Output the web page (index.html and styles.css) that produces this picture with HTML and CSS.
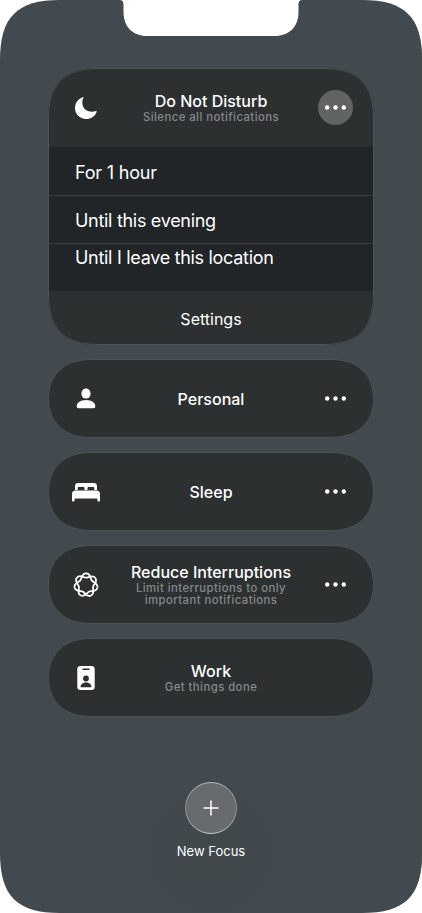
FILE: index.html
```html
<!DOCTYPE html>
<html lang="en">
<head>
<meta charset="utf-8">
<title>Focus</title>
<link rel="stylesheet" href="styles.css">
</head>
<body>
<svg class="defs" width="0" height="0" aria-hidden="true">
  <defs>
    <path id="pill" d="M.5 39.500C.5 16 15.500 .5 43 .5H283C310.500 .5 325.500 16 325.500 39.500S310.500 78.500 283 78.500H43C15.500 78.500 .5 63 .5 39.500Z"/>
    <g id="dots"><circle cx="2.200" cy="2.500" r="2.200"/><circle cx="10.500" cy="2.500" r="2.200"/><circle cx="18.800" cy="2.500" r="2.200"/></g>
    <path id="loop" d="M0-11.700C5-11.700 4.200-6.300 5.700-4.550C7.200-2.800 12.520-1.270 11.410 2.600"/>
  </defs>
</svg>
<main class="phone">
  <div class="notch"><svg width="182" height="37" viewBox="0 0 182 37"><path d="M0 0C3 .3 3.500 2 3.500 5V12C3.500 27 13 36 27 36H155C169 36 178.500 27 178.500 12V5C178.500 2 179 .3 182 0Z"/></svg></div>
  <div class="list">
    <section class="card dnd">
      <header class="row">
        <span class="icon"><svg width="24" height="24" viewBox="0 0 24 24"><path d="M8.800 1.200C3.800 3 1 7 1 12.100C1 18.400 5.900 23 12.100 23C17 23 21.300 20.200 22.700 15.700C22.900 15 22.400 14.700 21.800 15C20.700 15.500 19.600 15.700 18.200 15.700C12 15.700 8.300 12 8.300 6.200C8.300 4.700 8.600 3.200 9.300 2C9.700 1.400 9.500 .9 8.800 1.200Z"/></svg></span>
        <div class="text"><h2>Do Not Disturb</h2><p>Silence all notifications</p></div>
        <button class="more active" aria-label="More"><svg width="21" height="5"><use href="#dots"/></svg></button>
      </header>
      <ul class="options">
        <li class="first">For 1 hour</li>
        <li>Until this evening</li>
        <li class="last">Until I leave this location</li>
      </ul>
      <div class="settings">Settings</div>
      <svg class="outline" width="326" height="277"><path d="M.5 50C.5 16 16 .5 50 .5H276C310 .5 325.500 16 325.500 50V227C325.500 261 310 276.500 276 276.500H50C16 276.500 .5 261 .5 227Z"/></svg>
    </section>
    <section class="card row">
      <svg class="back" width="326" height="79"><use href="#pill"/></svg>
      <span class="icon"><svg width="20" height="22" viewBox="0 0 20 22"><ellipse cx="10" cy="5.600" rx="4.600" ry="5"/><path d="M2.700 20.300C1.300 20.300 .7 19.500 .7 18.300C.7 15 4.600 12.100 10 12.100S19.300 15 19.300 18.300C19.300 19.500 18.700 20.300 17.300 20.300Z"/></svg></span>
      <div class="text"><h2>Personal</h2></div>
      <button class="more" aria-label="More"><svg width="21" height="5"><use href="#dots"/></svg></button>
    </section>
    <section class="card row">
      <svg class="back" width="326" height="79"><use href="#pill"/></svg>
      <span class="icon"><svg width="28" height="20" viewBox="0 0 28 20"><path d="M3 8V4.200C3 2 4.200 1 6.300 1H21.700C23.800 1 25 2 25 4.200V8H22.300V6.500C22.300 5.400 21.800 5 20.800 5H17C16 5 15.500 5.400 15.500 6.500V8H12.500V6.500C12.500 5.400 12 5 11 5H7.200C6.200 5 5.700 5.400 5.700 6.500V8Z"/><path d="M0 18.400V12.200C0 9.800 1.200 8.600 3.600 8.600H24.400C26.800 8.600 28 9.800 28 12.200V18.400C28 19.800 25.400 19.800 25.400 18.400V16.600H2.600V18.400C2.600 19.800 0 19.800 0 18.400Z"/></svg></span>
      <div class="text"><h2>Sleep</h2></div>
      <button class="more" aria-label="More"><svg width="21" height="5"><use href="#dots"/></svg></button>
    </section>
    <section class="card row">
      <svg class="back" width="326" height="79"><use href="#pill"/></svg>
      <span class="icon"><svg class="loops" width="28" height="28" viewBox="-14 -14 28 28"><use href="#loop"/><use href="#loop" transform="rotate(51.430)"/><use href="#loop" transform="rotate(102.860)"/><use href="#loop" transform="rotate(154.290)"/><use href="#loop" transform="rotate(205.710)"/><use href="#loop" transform="rotate(257.140)"/><use href="#loop" transform="rotate(308.570)"/></svg></span>
      <div class="text"><h2>Reduce Interruptions</h2><p>Limit interruptions to only<br>important notifications</p></div>
      <button class="more" aria-label="More"><svg width="21" height="5"><use href="#dots"/></svg></button>
    </section>
    <section class="card row">
      <svg class="back" width="326" height="79"><use href="#pill"/></svg>
      <span class="icon"><svg width="18" height="26" viewBox="0 0 18 26"><rect x=".3" y="1" width="17.400" height="24" rx="3.200"/><g class="cut"><rect x="5.300" y="3.500" width="7.400" height="1.600" rx=".8"/><circle cx="9" cy="13.500" r="2.900"/><path d="M3.500 22.300C3.500 19 6 17.400 9 17.400S14.500 19 14.500 22.300Z"/></g></svg></span>
      <div class="text"><h2>Work</h2><p>Get things done</p></div>
    </section>
  </div>
  <div class="new">
    <button class="add" aria-label="New Focus"><svg width="52" height="52"><defs><linearGradient id="rim" x1="0" y1="0" x2="0" y2="1"><stop offset="0" stop-color="#b6babb"/><stop offset=".5" stop-color="#858a8c"/><stop offset="1" stop-color="#c4c8c9"/></linearGradient></defs><circle cx="26" cy="26" r="25.500" fill="#676b6d" stroke="url(#rim)"/><path d="M26 19V33M19 26H33" stroke="#fff" stroke-width="1.500" stroke-linecap="round"/></svg></button>
    <span>New Focus</span>
  </div>
</main>
</body>
</html>
```
FILE: styles.css
```css
* { box-sizing: border-box; }
body { margin: 0; background: #fff; font-family: Inter, "Liberation Sans", sans-serif; color: #fff; }
h2, p, ul { margin: 0; padding: 0; }
button { border: 0; padding: 0; background: none; }
svg { display: block; fill: #fff; }
.defs { position: absolute; }
.phone {
  position: relative;
  width: 422px;
  height: 913px;
  padding: 68px 48px 0;
  background:
    radial-gradient(circle at 211px 852px, #40484b 0, rgba(64, 72, 76, 0) 72px),
    linear-gradient(90deg, rgba(67, 75, 75, 0) 408px, #434b4b 422px),
    #42494f;
  clip-path: path("M0 60C0 17 17 0 60 0H362C405 0 422 17 422 60V853C422 896 405 913 362 913H60C17 913 0 896 0 853Z");
}
.notch { position: absolute; top: 0; left: 120px; }
.list { display: flex; flex-direction: column; gap: 14px; }
.card { position: relative; width: 326px; height: 79px; }
.row { display: grid; grid-template-columns: 77px 172px 77px; align-items: center; height: 79px; }
.back { position: absolute; inset: 0; fill: #2c3031; stroke: #4b5355; stroke-width: 1; }
.icon, .text, .more { position: relative; }
.icon { display: flex; justify-content: center; padding-right: 1px; }
.text { text-align: center; white-space: nowrap; }
.text:has(p) { padding-bottom: 2px; }
.more { display: flex; align-items: center; justify-content: center; width: 35px; height: 35px; margin-left: 21px; border-radius: 50%; }
.active { background: #616465; }
h2 { font-size: 16px; line-height: 20px; font-weight: 500; }
p { font-size: 11.300px; line-height: 12px; font-weight: 500; letter-spacing: .46px; color: #85898b; }
.loops { fill: none; stroke: #fff; stroke-width: 1.800; }
.cut { fill: #2c3031; }
.dnd { height: 277px; background: #2c3031; clip-path: path("M0 50C0 16 16 0 50 0H276C310 0 326 16 326 50V227C326 261 310 277 276 277H50C16 277 0 261 0 227Z"); }
.outline { position: absolute; inset: 0; fill: none; stroke: #4b5457; }
.options { height: 144px; list-style: none; background: #212527; font-size: 18px; letter-spacing: -.3px; }
.options li { height: 48px; padding-left: 27px; line-height: 49px; }
.options .first { line-height: 51px; letter-spacing: -.2px; }
.options li + li { border-top: 1px solid #3a3f41; }
.options .last { line-height: 28px; }
.settings { height: 54px; line-height: 56px; text-align: center; font-size: 16px; }
.new { display: flex; flex-direction: column; align-items: center; margin-top: 65px; font-size: 13px; line-height: 16px; gap: 9px; }
.add { color: #fff; }
```
